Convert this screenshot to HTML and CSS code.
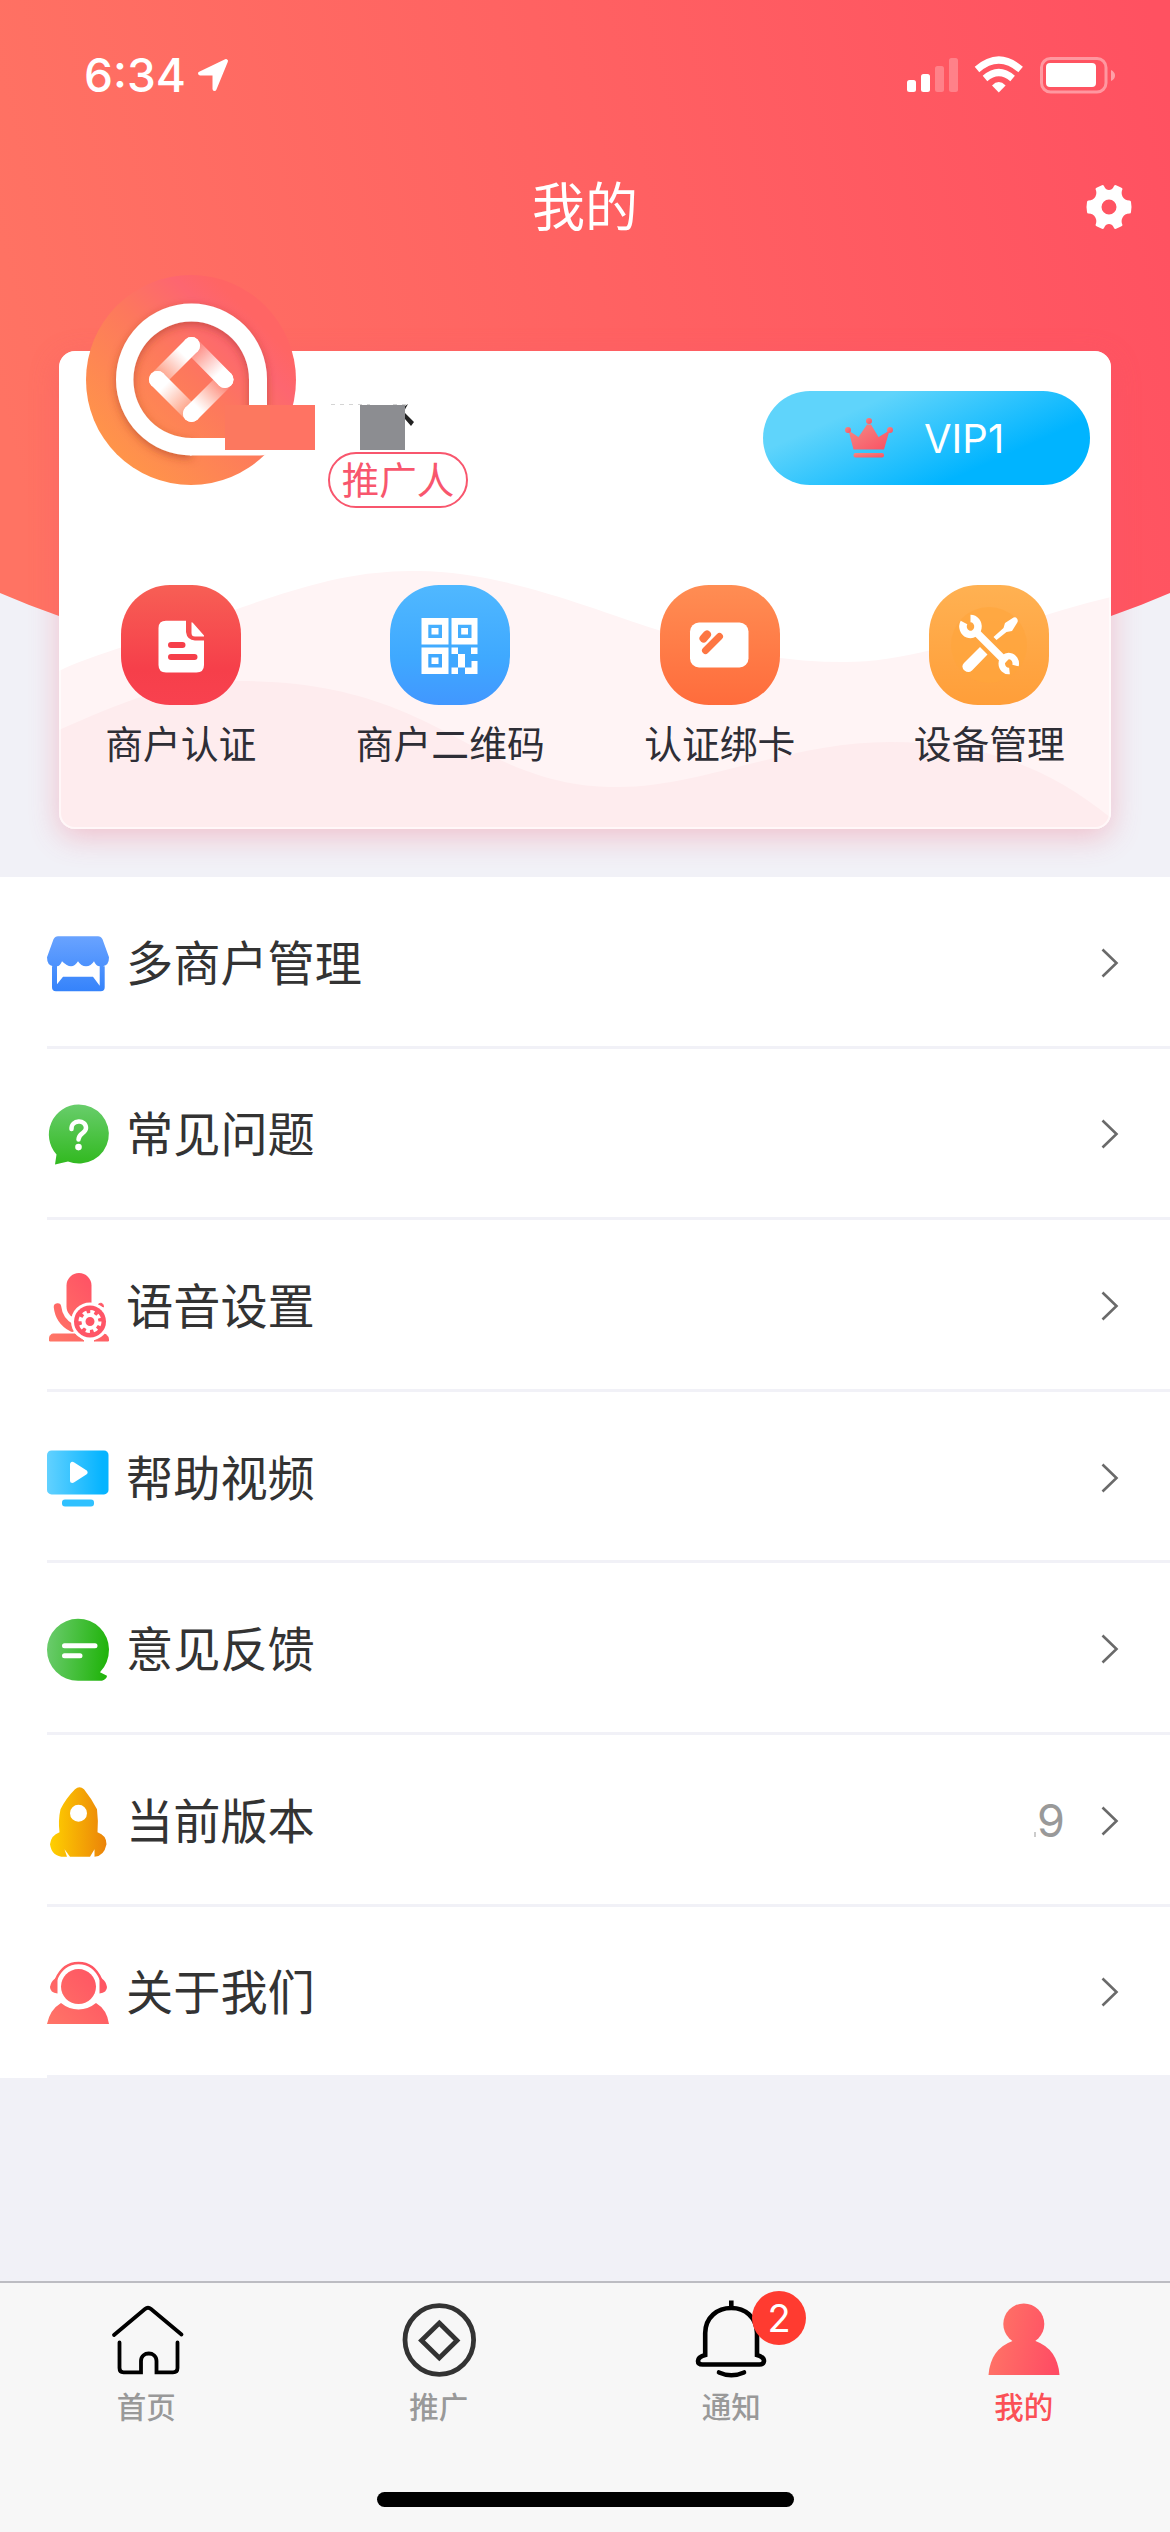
FILE: index.html
```html
<!DOCTYPE html>
<html lang="zh-CN">
<head>
<meta charset="utf-8">
<title>我的</title>
<link rel="stylesheet" href="styles.css">
</head>
<body>
<div class="app">
  <svg class="hero-bg" viewBox="0 0 1170 720" aria-hidden="true">
    <defs><linearGradient id="hero" gradientUnits="userSpaceOnUse" x1="0" y1="400" x2="1180" y2="130"><stop offset="0" stop-color="#ff7363"/><stop offset="1" stop-color="#ff5161"/></linearGradient></defs>
    <path fill="url(#hero)" d="M0 0H1170V593Q1140 606 1111 616Q585 790 59 616Q30 606 0 593Z"/>
  </svg>

  <header class="status">
    <div class="status-left">
      <span class="time">6:34</span>
      <svg width="32" height="34" viewBox="197 57 32 34"><path fill="#fff" stroke="#fff" stroke-width="4" stroke-linejoin="round" d="M226 60L200 72.500H214.500V88Z"/></svg>
    </div>
    <svg width="212" height="40" viewBox="905 54 212 40">
      <g fill="#fff">
        <rect x="907" y="79" width="9" height="12" rx="2.5"/><rect x="921" y="73" width="9" height="18" rx="2.5"/>
        <g opacity=".25"><rect x="935" y="65" width="9" height="26" rx="2.5"/><rect x="949" y="57" width="9" height="34" rx="2.5"/></g>
        <path d="M998.8 91.5L992 84.4Q998.8 77.8 1005.600 84.400Z"/>
        <rect x="1046" y="62" width="50" height="24" rx="4"/>
        <path opacity=".45" d="M1111 69Q1115 71 1115 74.500T1111 80Z"/>
      </g>
      <g fill="none" stroke="#fff" stroke-width="7"><path d="M977 68.500Q998.800 49.500 1020.600 68.500"/><path d="M985 77.500Q998.800 65.500 1012.600 77.500"/></g>
      <rect x="1041.500" y="57.500" width="64.500" height="33.500" rx="9" fill="none" stroke="#fff" stroke-opacity=".4" stroke-width="3"/>
    </svg>
  </header>

  <nav class="navbar">
    <span></span>
    <h1>我的</h1>
    <svg class="gear" width="48" height="48" viewBox="-24 -24 48 48">
      <path fill="#fff" fill-rule="evenodd" d="M-13.500-18Q-13.500-18.700-12-19.500L-6.500-22Q-5-22-4.500-20C-3-16 3-16 4.500-20Q5-22 6.500-22L12-19.500Q13.500-18.700 13.500-18C11-13 14-6.500 20.500-6.500Q22-6.500 22-5Q23 0 22 5Q22 6.500 20.500 6.500C14 6.500 11 13 13.500 18Q13.500 18.700 12 19.500L6.500 22Q5 22 4.500 20C3 16-3 16-4.500 20Q-5 22-6.500 22L-12 19.500Q-13.500 18.700-13.500 18C-11 13-14 6.500-20.500 6.500Q-22 6.500-22 5Q-23 0-22-5Q-22-6.500-20.500-6.500C-14-6.500-11-13-13.500-18ZM0-7.500A7.500 7.500 0 1 0 0 7.500A7.500 7.500 0 1 0 0-7.500Z"/>
    </svg>
  </nav>

  <section class="card">
    <svg class="waves" viewBox="59 351 1052 478" aria-hidden="true">
      <path fill="#fff4f5" d="M59 671C90 655 150 640 240 608S370 571 418 571C500 571 590 608 655 629S780 662 845 662C930 662 1020 618 1111 597V829H59Z"/>
      <path fill="#feecee" d="M59 730C120 703 170 681 240 681C370 681 430 725 490 755S590 787 620 787C700 787 790 742 890 742C970 742 1040 760 1111 818V829H59Z"/>
      <rect x="60" y="352" width="1050" height="476" rx="15" fill="none" stroke="#fff" stroke-opacity=".6" stroke-width="2"/>
    </svg>
    <div class="profile">
      <svg class="avatar" width="232" height="210" viewBox="86 275 232 210">
        <defs>
          <linearGradient id="av" x1=".15" y1=".85" x2=".8" y2=".2"><stop offset="0" stop-color="#ff944a"/><stop offset=".55" stop-color="#fd785d"/><stop offset=".85" stop-color="#fd6670"/><stop offset="1" stop-color="#ff6564"/></linearGradient>
          <linearGradient id="b1" gradientUnits="userSpaceOnUse" x1="188" y1="347" x2="158" y2="378"><stop offset=".2" stop-color="#fff"/><stop offset="1" stop-color="#fff" stop-opacity=".2"/></linearGradient>
          <linearGradient id="b2" gradientUnits="userSpaceOnUse" x1="225" y1="380" x2="194" y2="347"><stop offset=".2" stop-color="#fff"/><stop offset="1" stop-color="#fff" stop-opacity=".15"/></linearGradient>
          <linearGradient id="b3" gradientUnits="userSpaceOnUse" x1="191" y1="414" x2="224" y2="381"><stop offset=".2" stop-color="#fff"/><stop offset="1" stop-color="#fff" stop-opacity=".1"/></linearGradient>
          <linearGradient id="b4" gradientUnits="userSpaceOnUse" x1="157" y1="380" x2="190" y2="413"><stop offset=".2" stop-color="#fff"/><stop offset="1" stop-color="#fff" stop-opacity=".2"/></linearGradient>
          <filter id="sh" x="-20%" y="-20%" width="140%" height="140%"><feDropShadow dx="0" dy="3" stdDeviation="4" flood-color="#9b2f20" flood-opacity=".5"/></filter>
        </defs>
        <circle cx="191" cy="380" r="105" fill="url(#av)"/>
        <path filter="url(#sh)" fill="#fff" fill-rule="evenodd" d="M191.500 303.500A75.500 76 0 0 1 267 379V405L249 420V438H191.500V455.500A75.500 76 0 0 1 191.500 303.500ZM191.500 321.500A58 58.200 0 1 0 191.500 438H249V379.500A57.500 58 0 0 0 191.500 321.500Z"/>
        <path fill="#fff" d="M190 438H270V450Q268 455.500 260 455.500H190Z"/>
        <g stroke-width="17" stroke-linecap="round"><path stroke="url(#b1)" d="M191.500 345.500L157.500 379.500"/><path stroke="url(#b4)" d="M157.500 379.500L191.500 413.500"/><path stroke="url(#b3)" d="M191.500 413.500L225 380"/><path stroke="url(#b2)" d="M225 379.500L191.500 345.500"/></g>
        <g fill="#fff"><circle cx="191.500" cy="345.500" r="8.500"/><circle cx="157.500" cy="379.500" r="8.500"/><circle cx="191.500" cy="413.500" r="8.500"/><circle cx="225" cy="379.500" r="8.500"/></g>
        <path fill="#fc785f" d="M225 405H270V450H225Z"/><path fill="#ff7363" d="M270 405H315V450H270Z"/>
      </svg>
      <div class="identity">
        <svg width="92" height="50" viewBox="328 400 92 50">
          <path fill="#222" d="M405 406L408 404Q405 409 404 412ZM405 413L414 422L411 426L405 419Z"/>
          <path stroke="#aaa" stroke-width="1" stroke-opacity=".5" stroke-dasharray="4 5" d="M331 404.500H370M393 404.500H407"/>
          <path fill="#8c8d91" d="M360 405H405V450H360Z"/>
        </svg>
        <span class="tag">推广人</span>
      </div>
      <div class="vip">
        <svg width="48" height="40" viewBox="845 418 48 40">
          <defs><linearGradient id="cr" x1="0" y1="0" x2="1" y2="1"><stop offset="0" stop-color="#f48a84"/><stop offset="1" stop-color="#fa5063"/></linearGradient></defs>
          <g fill="url(#cr)"><path d="M848.500 430.500L858.500 437L867 424.500H871L878.500 437L889.500 430.500L884 449.500H853.500Z"/><circle cx="869" cy="421" r="3"/><circle cx="848" cy="430" r="3"/><circle cx="890" cy="430" r="3"/><rect x="853.500" y="453" width="30.500" height="4.500" rx="2"/></g>
        </svg>
        <span>VIP1</span>
      </div>
    </div>
    <div class="actions">
      <div class="action">
        <svg class="tile tile-red" viewBox="0 0 120 120"><path fill="#fff" d="M45 35.700H65V47Q66 55 74 55.500H83V80Q83 87.500 75.500 87.500H45Q37.500 87.500 37.500 80V43Q37.500 35.700 45 35.700ZM70.500 37.500Q71 37 72 38L83 50.500V51.500H74Q70.500 51.500 70.500 48Z"/><path stroke="#f63f4a" stroke-width="6" stroke-linecap="round" d="M50 60H61.500M50 72H73.500"/></svg>
        <span>商户认证</span>
      </div>
      <div class="action">
        <svg class="tile tile-blue" viewBox="0 0 120 120"><path fill="#fff" fill-rule="evenodd" d="M31.500 33H58.500V59.500H31.500ZM38.300 39.700V53H52V39.700ZM41.500 43H48.500V49.500H41.500ZM61.500 33H87.500V59.500H61.500ZM68 39.700V53H81.500V39.700ZM71.200 43H78V49.500H71.200ZM31.500 62.500H58.500V89H31.500ZM38.300 69V82.500H52V69ZM41.500 72.500H48.500V79H41.500ZM61.500 62.500H68V69H61.500ZM81 62.500H87.500V69H81ZM68 69H75V82.500H68ZM61.500 82.500H68V89H61.500ZM81.500 76H87.500V89H75V82.500H81.500Z"/></svg>
        <span>商户二维码</span>
      </div>
      <div class="action">
        <svg class="tile tile-orange" viewBox="0 0 120 120"><rect x="30" y="37.500" width="58.500" height="45" rx="9" fill="#fff"/><path stroke="#fd7643" stroke-width="8" stroke-linecap="round" d="M43.500 53.500L47 49.500"/><path stroke="#fd7643" stroke-width="7" stroke-linecap="round" d="M45.500 65.500L59.500 51.500"/></svg>
        <span>认证绑卡</span>
      </div>
      <div class="action">
        <svg class="tile tile-yellow" viewBox="0 0 120 120"><circle cx="60" cy="60" r="38" fill="#ffa53c" opacity=".6"/>
          <g fill="none" stroke="#fff"><path stroke-width="7.500" d="M46 46L77 77"/><path stroke-width="7.500" d="M35 37.500A7.500 8 0 1 0 41.500 33.500"/><path stroke-width="6.500" d="M86.500 80.500A7 7.500 0 1 0 80.500 86"/></g>
          <path fill="#fff" d="M87 32.500Q90 35 88 38L83 46L77.500 47L67.500 55L64.500 52L74.500 43L76 38L83 33.500Q85.500 31.500 87 32.500ZM51 62L58.500 69.500L43 85.500Q39.500 88.500 35.500 85.500Q31.500 81.500 35 78Z"/></svg>
        <span>设备管理</span>
      </div>
    </div>
  </section>

  <main class="list">
    <div class="row">
      <svg class="icon" viewBox="47 926.8 62 72"><defs><linearGradient id="st" x1="0" y1="0" x2="0" y2="1"><stop offset="0" stop-color="#69a3ff"/><stop offset="1" stop-color="#3583fb"/></linearGradient></defs>
        <path fill="url(#st)" fill-rule="evenodd" d="M58 936H98Q101 936 102.500 939L109 957Q109 965 103 966H104.700V987Q104.700 991 100.700 991H56Q52 991 52 987V966H53Q47 965 47 957L53.500 939Q55 936 58 936ZM57 966V984L63 976.500H93L99.700 985.500V966Q96 966 94 961Q91 966 86 966T78 961Q75 966 71 966T62 961Q60 966 57 966Z"/></svg>
      <span class="label">多商户管理</span><svg class="chevron" viewBox="0 0 18 30"><path d="M1.500 1.500L15.500 15L1.500 28.500"/></svg>
    </div>
    <div class="row">
      <svg class="icon" viewBox="47 1098.4 62 72"><defs><linearGradient id="gr" x1="0" y1="0" x2="0" y2="1"><stop offset="0" stop-color="#68cd6b"/><stop offset="1" stop-color="#31b91f"/></linearGradient></defs>
        <path fill="url(#gr)" d="M78.500 1105A30 29.500 0 1 1 68 1162L55 1165L56.500 1155A30 30 0 0 1 78.500 1105Z"/><path fill="none" stroke="#fff" stroke-width="4.500" stroke-linecap="round" d="M71.500 1129.500C71 1120 86 1119 86 1128.500C86 1134 78.500 1133 78.500 1140"/><circle cx="78.500" cy="1147.500" r="3.300" fill="#fff"/></svg>
      <span class="label">常见问题</span><svg class="chevron" viewBox="0 0 18 30"><path d="M1.500 1.500L15.500 15L1.500 28.500"/></svg>
    </div>
    <div class="row">
      <svg class="icon" viewBox="47 1270 62 72"><defs><linearGradient id="rd" gradientUnits="userSpaceOnUse" x1="47" y1="1335" x2="105" y2="1290"><stop offset="0" stop-color="#ff7666"/><stop offset="1" stop-color="#ff5165"/></linearGradient></defs>
        <rect x="66.500" y="1273" width="25" height="46" rx="12.500" fill="url(#rd)"/>
        <path fill="none" stroke="url(#rd)" stroke-width="7.500" stroke-linecap="round" d="M57.500 1307Q59 1321 72 1328"/>
        <path stroke="url(#rd)" stroke-width="1" fill="url(#rd)" d="M53 1334H75L84 1341H49.500Q49 1334 53 1334ZM104 1334Q109 1335 108.500 1341H94ZM98 1304.500Q103 1301 103.500 1307Z"/>
        <circle cx="90" cy="1321.500" r="19" fill="#fff"/><circle cx="90" cy="1321.500" r="16" fill="#ff5566"/>
        <circle cx="90" cy="1321.500" r="9.500" fill="none" stroke="#fff" stroke-width="4" stroke-dasharray="4 3.460"/><circle cx="90" cy="1321.500" r="6.500" fill="none" stroke="#fff" stroke-width="4"/></svg>
      <span class="label">语音设置</span><svg class="chevron" viewBox="0 0 18 30"><path d="M1.500 1.500L15.500 15L1.500 28.500"/></svg>
    </div>
    <div class="row">
      <svg class="icon" viewBox="47 1441.6 62 72"><defs><linearGradient id="sk" x1="0" y1="0" x2="1" y2="0"><stop offset="0" stop-color="#62d1ff"/><stop offset=".9" stop-color="#06b4ff"/></linearGradient></defs>
        <rect x="47" y="1450" width="61.500" height="44" rx="4.500" fill="url(#sk)"/><rect x="62" y="1499" width="32" height="7" rx="3" fill="#2fc1ff"/><path fill="#fff" stroke="#fff" stroke-width="5" stroke-linejoin="round" d="M72.500 1464V1480L85 1472Z"/></svg>
      <span class="label">帮助视频</span><svg class="chevron" viewBox="0 0 18 30"><path d="M1.500 1.500L15.500 15L1.500 28.500"/></svg>
    </div>
    <div class="row">
      <svg class="icon" viewBox="47 1613.2 62 72"><defs><linearGradient id="gh" x1="0" y1="0" x2="1" y2=".1"><stop offset="0" stop-color="#6dcc70"/><stop offset="1" stop-color="#22b40d"/></linearGradient></defs>
        <path fill="url(#gh)" d="M78 1619A31 30.500 0 0 1 109 1649.500Q109 1663 100 1672.500L107 1676Q107 1679 102 1681H78A31 31 0 0 1 78 1619Z"/><path stroke="#fff" stroke-width="5" stroke-linecap="round" d="M64.500 1646H95M64.500 1656H80"/></svg>
      <span class="label">意见反馈</span><svg class="chevron" viewBox="0 0 18 30"><path d="M1.500 1.500L15.500 15L1.500 28.500"/></svg>
    </div>
    <div class="row">
      <svg class="icon" viewBox="47 1784.8 62 72"><defs><linearGradient id="rk" x1="0" y1="0" x2="1" y2="0"><stop offset="0" stop-color="#ffd000"/><stop offset="1" stop-color="#eb8309"/></linearGradient></defs>
        <path fill="url(#rk)" fill-rule="evenodd" d="M75 1789Q79.500 1785 84 1789Q92 1799 97 1809Q98.500 1821 97.500 1832Q106.500 1835 106.500 1844Q104 1856 94.500 1856.500V1849L90 1856.500H70L64.500 1849L67 1856.500Q52 1858 50 1844Q51 1835 59.500 1832Q58 1820 60.500 1809Q66 1798 75 1789ZM78.500 1804.500A8.500 8.500 0 1 0 78.500 1821.500A8.500 8.500 0 1 0 78.500 1804.500Z"/></svg>
      <span class="label">当前版本</span><span class="value"><i></i>9</span><svg class="chevron" viewBox="0 0 18 30"><path d="M1.500 1.500L15.500 15L1.500 28.500"/></svg>
    </div>
    <div class="row">
      <svg class="icon" viewBox="47 1956.4 62 72"><defs><linearGradient id="ab" gradientUnits="userSpaceOnUse" x1="47" y1="2024" x2="100" y2="1975"><stop offset="0" stop-color="#ff7567"/><stop offset="1" stop-color="#ff5563"/></linearGradient></defs>
        <ellipse cx="78.500" cy="1987" rx="17.500" ry="17.500" fill="url(#ab)"/><path fill="url(#ab)" d="M61 2003.500Q69 2010 78.500 2010T96 2003.500Q107 2010 109 2024.500H47Q50 2010 61 2003.500Z"/>
        <path fill="none" stroke="url(#ab)" stroke-width="2.500" d="M56 1980Q63 1963.500 78.500 1963.500T101 1980"/><path fill="url(#ab)" d="M57.500 1977V1994Q50 1993 50 1987.500Q51 1982 54.500 1979.500ZM99.500 1977V1994Q107 1993 107 1987.500Q106 1982 102.500 1979.500Z"/></svg>
      <span class="label">关于我们</span><svg class="chevron" viewBox="0 0 18 30"><path d="M1.500 1.500L15.500 15L1.500 28.500"/></svg>
    </div>
  </main>

  <footer class="tabbar">
    <div class="tabs">
      <div class="tab">
        <svg viewBox="106.500 2298 80 80" fill="none" stroke="#000" stroke-width="3.800" stroke-linecap="round"><path d="M114.500 2335L145.500 2309Q148.500 2306.500 151.500 2309L182 2334.500"/><path d="M120 2342.500V2368Q120 2372.300 124 2372.300H141.500V2361C141.500 2351 157 2351 157 2361V2372.300H173.500Q178 2372.300 178 2368V2342.500"/></svg>
        <span>首页</span>
      </div>
      <div class="tab">
        <svg viewBox="399 2298 80 80" fill="none" stroke="#333" stroke-width="4.800"><circle cx="439.300" cy="2340" r="34.300"/><path d="M439.300 2323L457 2340.500L439.300 2358L421.500 2340.500Z"/></svg>
        <span>推广</span>
      </div>
      <div class="tab">
        <svg viewBox="691.500 2298 80 80" fill="none" stroke="#000" stroke-width="4.600"><path d="M731.800 2300.500V2308"/><path d="M705.700 2355V2333C706 2317 718 2308 731.800 2308S757 2317 757.500 2333V2355Q764.500 2357 764.500 2361Q764 2364.500 760 2364.500H703Q698.500 2364.500 698.500 2361Q698.500 2357 705.700 2355Z"/><path stroke-linecap="round" d="M719.500 2372.500Q731.800 2378 744.500 2372.500"/></svg>
        <b class="badge">2</b>
        <span>通知</span>
      </div>
      <div class="tab active">
        <svg viewBox="983.500 2298 80 80"><defs><linearGradient id="me" gradientUnits="userSpaceOnUse" x1="990" y1="2335" x2="1059" y2="2350"><stop offset="0" stop-color="#ff7466"/><stop offset="1" stop-color="#ff4c64"/></linearGradient></defs><g fill="url(#me)"><circle cx="1023.300" cy="2324" r="20.500"/><path d="M1012 2341H1035Q1057 2349 1059 2375H988Q990 2349 1012 2341Z"/></g></svg>
        <span>我的</span>
      </div>
    </div>
    <div class="home-indicator"></div>
  </footer>
</div>
</body>
</html>
```
FILE: styles.css
```css
* { box-sizing: border-box; }

body {
  margin: 0;
  background: #f1f1f7;
  color: #333;
  font-family: Inter, "Noto Sans CJK SC", sans-serif;
}

svg { display: block; flex: none; overflow: visible; }

.app {
  position: relative;
  display: flex;
  flex-direction: column;
  width: 1170px;
  height: 2532px;
  overflow: hidden;
}

.hero-bg {
  position: absolute;
  top: 0;
  left: 0;
  width: 1170px;
  height: 720px;
}

.status {
  position: relative;
  display: flex;
  align-items: center;
  justify-content: space-between;
  height: 149px;
  padding: 0 53px 0 84px;
}

.status-left { display: flex; align-items: center; gap: 10px; }

.time {
  width: 103px;
  color: #fff;
  font-size: 46px;
  font-weight: 500;
  line-height: 50px;
  white-space: nowrap;
}

.navbar {
  position: relative;
  display: grid;
  grid-template-columns: 1fr auto 1fr;
  align-items: center;
  height: 116px;
  padding: 0 37px;
}

.navbar h1 {
  margin: 0;
  padding-top: 2px;
  color: #fff;
  font-size: 53px;
  font-weight: 400;
  line-height: 60px;
}

.gear { justify-self: end; }

.card {
  position: relative;
  width: 1052px;
  height: 478px;
  margin: 86px 0 48px 59px;
  border-radius: 16px;
  background: #fff;
  box-shadow: 0 8px 30px rgba(240, 80, 105, 0.3);
}

.waves {
  position: absolute;
  inset: 0;
  width: 1052px;
  height: 478px;
  overflow: hidden;
  border-radius: 16px;
}

.profile {
  position: relative;
  display: flex;
  align-items: flex-start;
  height: 234px;
  padding: 0 21px 0 27px;
}

.avatar { margin-top: -76px; }

.identity {
  display: flex;
  flex-direction: column;
  gap: 2px;
  margin: 49px auto 0 10px;
}

.tag {
  width: 140px;
  height: 56px;
  border: 2px solid #f8566d;
  border-radius: 28px;
  color: #f8566d;
  font-size: 37.5px;
  line-height: 54px;
  text-align: center;
  white-space: nowrap;
}

.vip {
  display: flex;
  align-items: center;
  gap: 31px;
  width: 327px;
  height: 94px;
  margin-top: 40px;
  padding-left: 82px;
  border-radius: 47px;
  background: linear-gradient(156deg, #5fd4fb 25%, #00b4ff 72%);
  color: #fff;
  font-size: 40px;
}

.actions {
  position: relative;
  display: flex;
  margin: 0 -13px;
}

.action {
  display: flex;
  flex: 1;
  flex-direction: column;
  align-items: center;
  gap: 14px;
  color: #2e2e36;
  font-size: 37.8px;
  line-height: 50px;
  white-space: nowrap;
}

.tile { width: 120px; height: 120px; border-radius: 49px; }
.tile-red { background: linear-gradient(#f75f55, #f63f4a 70%, #f8414f); }
.tile-blue { background: linear-gradient(#50b8ff, #3fa9ff 60%, #4197ff); }
.tile-orange { background: linear-gradient(#ff8d53, #ff6c3c); }
.tile-yellow { background: linear-gradient(#ffb152, #ff9e39); }

.list { background: #fff; }

.row {
  display: flex;
  align-items: center;
  height: 171.6px;
  padding: 0 51px 0 47px;
  background: linear-gradient(#f1f1f7, #f1f1f7) 47px 100% / 1123px 3px no-repeat;
}

.icon { width: 62px; height: 72px; }

.label {
  flex: 1;
  margin-left: 17px;
  padding-top: 2px;
  font-size: 47.2px;
  line-height: 60px;
}

.value {
  display: flex;
  align-items: baseline;
  gap: 1px;
  margin-right: 36px;
  color: #999;
  font-size: 45px;
}

.value i { width: 2px; height: 5px; background: #ccc; }

.chevron { width: 18px; height: 30px; }
.chevron path { fill: none; stroke: #6a6a6a; stroke-width: 2.6px; }

.tabbar {
  position: relative;
  display: flex;
  flex-direction: column;
  align-items: center;
  height: 251px;
  margin-top: auto;
  border-top: 2px solid #bcbcc2;
  background: #f7f7f7;
}

.tabs { display: flex; width: 100%; height: 209px; padding-top: 15px; }

.tab {
  position: relative;
  display: flex;
  flex: 1;
  flex-direction: column;
  align-items: center;
  gap: 9px;
  color: #999;
  font-size: 29.5px;
  font-weight: 500;
  line-height: 40px;
}

.tab svg { width: 80px; height: 80px; }
.tab.active { color: #fb5056; }

.badge {
  position: absolute;
  top: -7px;
  left: 167px;
  width: 54px;
  height: 54px;
  border-radius: 50%;
  background: #ff3b30;
  color: #fff;
  font-size: 38px;
  font-weight: 400;
  line-height: 54px;
  text-align: center;
}

.home-indicator { width: 417px; height: 15px; border-radius: 8px; background: #000; }
```
